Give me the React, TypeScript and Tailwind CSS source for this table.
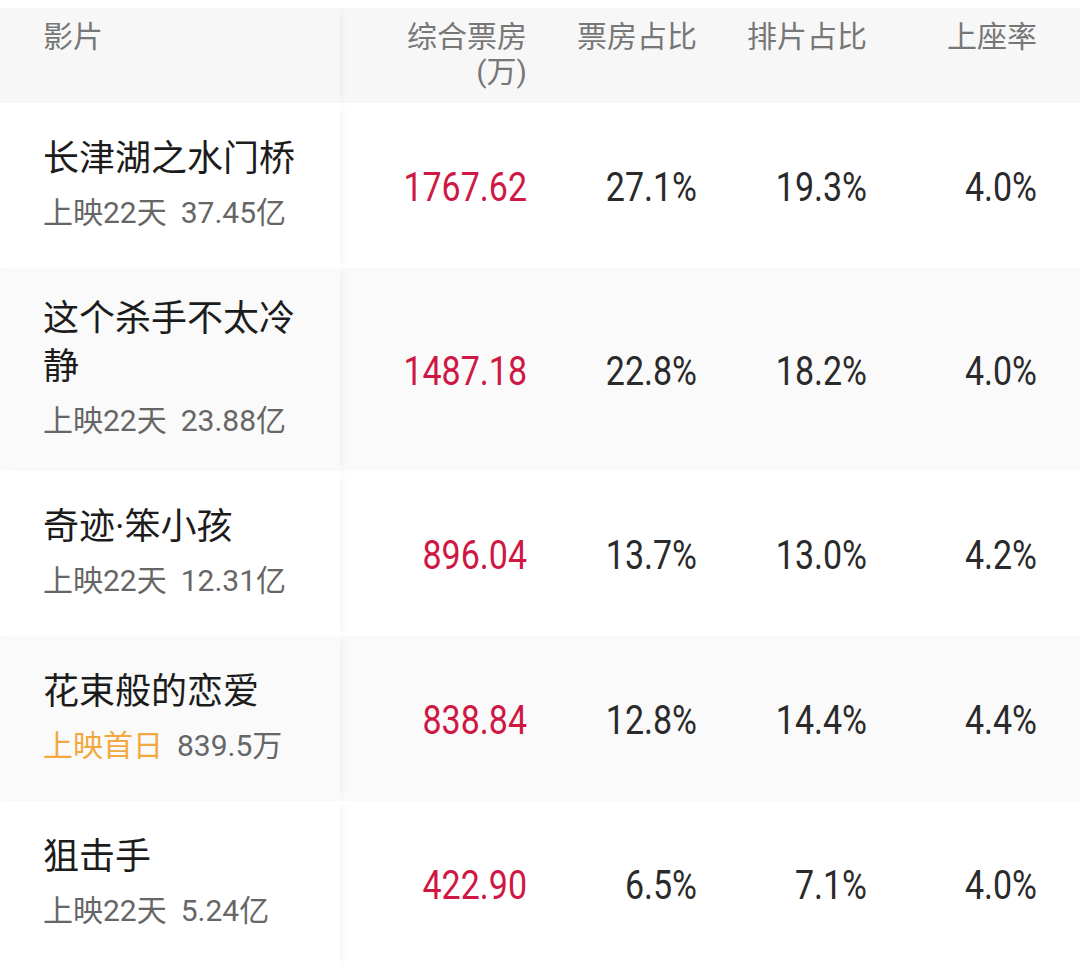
const films = [
  { title: "长津湖之水门桥", tag: "上映22天", total: "37.45亿", box: "1767.62", boxShare: "27.1%", showShare: "19.3%", seat: "4.0%" },
  { title: "这个杀手不太冷静", tag: "上映22天", total: "23.88亿", box: "1487.18", boxShare: "22.8%", showShare: "18.2%", seat: "4.0%" },
  { title: "奇迹·笨小孩", tag: "上映22天", total: "12.31亿", box: "896.04", boxShare: "13.7%", showShare: "13.0%", seat: "4.2%" },
  { title: "花束般的恋爱", tag: "上映首日", total: "839.5万", box: "838.84", boxShare: "12.8%", showShare: "14.4%", seat: "4.4%", first: true },
  { title: "狙击手", tag: "上映22天", total: "5.24亿", box: "422.90", boxShare: "6.5%", showShare: "7.1%", seat: "4.0%" },
];

const cjk = "font-['Roboto','Noto_Sans_CJK_SC',sans-serif]";
const cols = "grid grid-cols-[340px_187px_170px_170px_170px] pr-[43px]";

function Num({ value, red }: { value: string; red?: boolean }) {
  return (
    <div className="flex items-center justify-end">
      <span
        className={`inline-block text-[34px] leading-[40px] scale-y-[1.22] font-['Roboto',sans-serif] ${
          red ? "text-[#cf1744]" : "text-[#2a2a2a]"
        }`}
      >
        {value}
      </span>
    </div>
  );
}

export default function App() {
  return (
    <div className={`w-[1080px] min-h-[968px] bg-white ${cjk}`}>
      <div className="h-2 bg-white" />

      {/* header */}
      <div className={`${cols} bg-[#f7f7f7] h-[95px] text-[30px] leading-[35px] text-[#777]`}>
        <div className="pl-[43px] pt-[11px] bg-[#f7f7f7] shadow-[6px_0_8px_-4px_rgba(0,0,0,0.05)] relative z-10">影片</div>
        <div className="pt-[11px] text-right">
          <div>综合票房</div>
          <div>(万)</div>
        </div>
        <div className="pt-[11px] text-right">票房占比</div>
        <div className="pt-[11px] text-right">排片占比</div>
        <div className="pt-[11px] text-right">上座率</div>
      </div>

      {films.map((f, i) => {
        const bg = i % 2 === 1 ? "bg-[#fafafa]" : "bg-white";
        return (
          <div key={f.title} className={`${cols} min-h-[165px] ${bg}`}>
            <div
              className={`flex flex-col justify-center pl-[43px] pr-[36px] pt-[27px] pb-[30px] relative z-10 shadow-[6px_0_8px_-4px_rgba(0,0,0,0.05)] ${bg}`}
            >
              <div className="text-[36px] leading-[48px] text-[#1c1c1c]">{f.title}</div>
              <div className="mt-[10px] text-[30px] leading-[40px] text-[#666] whitespace-nowrap">
                <span className={f.first ? "text-[#f2a83e]" : ""}>{f.tag}</span>
                <span className="ml-[14px]">{f.total}</span>
              </div>
            </div>
            <Num value={f.box} red />
            <Num value={f.boxShare} />
            <Num value={f.showShare} />
            <Num value={f.seat} />
          </div>
        );
      })}
    </div>
  );
}
